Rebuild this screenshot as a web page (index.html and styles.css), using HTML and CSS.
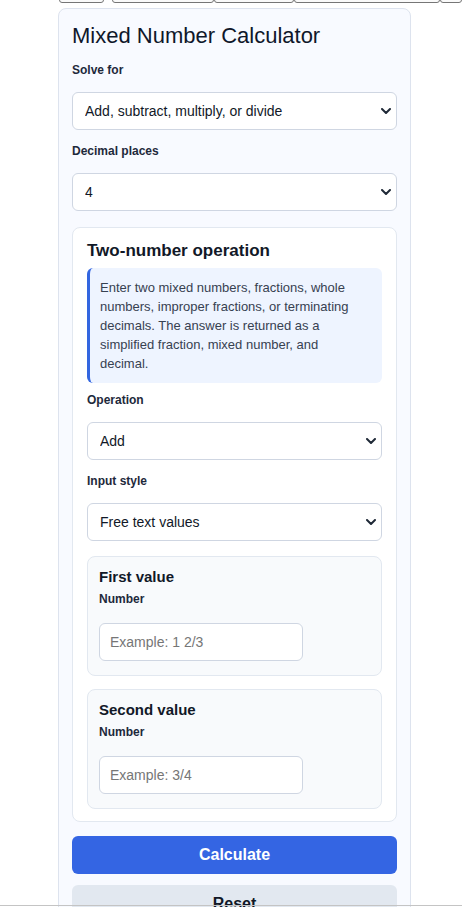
FILE: index.html
```html
<!DOCTYPE html>
<html lang="en">
<head>
<meta charset="utf-8">
<title>Mixed Number Calculator</title>
<link rel="stylesheet" href="styles.css">
</head>
<body>
<nav class="topnav" aria-label="Site">
  <button class="navbtn nb1" type="button" aria-label="Home"></button>
  <button class="navbtn nb2" type="button" aria-label="Calculators"></button>
  <button class="navbtn nb3" type="button" aria-label="Math"></button>
  <button class="navbtn nb4" type="button" aria-label="Fractions"></button>
  <button class="navbtn nb5" type="button" aria-label="More"></button>
</nav>

<main class="card">
  <h1 class="title">Mixed Number Calculator</h1>

  <label class="label" for="solve">Solve for</label>
  <div class="select-wrap">
    <select id="solve" class="select">
      <option>Add, subtract, multiply, or divide</option>
    </select>
    <svg class="chev" width="10" height="6" viewBox="0 0 10 6" aria-hidden="true"><path d="M1 1 L5 5 L9 1" fill="none" stroke="#1f2937" stroke-width="2" stroke-linecap="round" stroke-linejoin="round"/></svg>
  </div>

  <label class="label" for="dec">Decimal places</label>
  <div class="select-wrap">
    <select id="dec" class="select">
      <option>4</option>
    </select>
    <svg class="chev" width="10" height="6" viewBox="0 0 10 6" aria-hidden="true"><path d="M1 1 L5 5 L9 1" fill="none" stroke="#1f2937" stroke-width="2" stroke-linecap="round" stroke-linejoin="round"/></svg>
  </div>

  <section class="panel">
    <h2 class="panel-title">Two-number operation</h2>
    <p class="info">Enter two mixed numbers, fractions, whole numbers, improper fractions, or terminating decimals. The answer is returned as a simplified fraction, mixed number, and decimal.</p>

    <label class="label label-first" for="op">Operation</label>
    <div class="select-wrap">
      <select id="op" class="select">
        <option>Add</option>
      </select>
      <svg class="chev" width="10" height="6" viewBox="0 0 10 6" aria-hidden="true"><path d="M1 1 L5 5 L9 1" fill="none" stroke="#1f2937" stroke-width="2" stroke-linecap="round" stroke-linejoin="round"/></svg>
    </div>

    <label class="label" for="style">Input style</label>
    <div class="select-wrap">
      <select id="style" class="select">
        <option>Free text values</option>
      </select>
      <svg class="chev" width="10" height="6" viewBox="0 0 10 6" aria-hidden="true"><path d="M1 1 L5 5 L9 1" fill="none" stroke="#1f2937" stroke-width="2" stroke-linecap="round" stroke-linejoin="round"/></svg>
    </div>

    <div class="valbox valbox-first">
      <h3 class="val-title">First value</h3>
      <label class="label label-num" for="v1">Number</label>
      <input id="v1" class="input" type="text" placeholder="Example: 1 2/3">
    </div>

    <div class="valbox valbox-second">
      <h3 class="val-title">Second value</h3>
      <label class="label label-num" for="v2">Number</label>
      <input id="v2" class="input" type="text" placeholder="Example: 3/4">
    </div>
  </section>

  <button class="btn btn-primary" type="button">Calculate</button>
  <button class="btn btn-secondary" type="button">Reset</button>
</main>

<div class="bottom-edge"></div>
</body>
</html>
```

FILE: styles.css
```css
html, body {
  margin: 0;
  padding: 0;
  background: #ffffff;
  overflow: hidden;
}

body {
  font-family: "Liberation Sans", Arial, sans-serif;
  color: #1f2937;
}

.topnav {
  display: flex;
  margin: -27px 0 5px 59px;
  height: 30px;
  white-space: nowrap;
}

.navbtn {
  height: 30px;
  border: 1px solid #767676;
  border-radius: 3px;
  background: #fafafa;
  padding: 0;
  flex: none;
}

.nb1 { width: 45px; margin-right: 8px; }
.nb2 { width: 102px; }
.nb3 { width: 80px; }
.nb4 { width: 146px; }
.nb5 { width: 22px; }

.card {
  box-sizing: border-box;
  width: 353px;
  margin-left: 58px;
  padding: 14px 13px 40px;
  background: #f8faff;
  border: 1px solid #dde3ee;
  border-radius: 8px;
}

.title {
  margin: 0;
  font-size: 22px;
  line-height: 26px;
  font-weight: 400;
  color: #0f172a;
}

.label {
  display: block;
  margin: 14px 0 15px;
  font-size: 12px;
  line-height: 14px;
  font-weight: 700;
  color: #1e293b;
}

.label-first {
  margin-top: 10px;
}

.select-wrap {
  position: relative;
}

.select {
  display: block;
  box-sizing: border-box;
  width: 100%;
  height: 38px;
  margin: 0;
  padding: 0 30px 0 12px;
  border: 1px solid #cfd6e2;
  border-radius: 6px;
  background: #ffffff;
  font: 14px "Liberation Sans", Arial, sans-serif;
  color: #111827;
  -webkit-appearance: none;
  appearance: none;
}

.chev {
  position: absolute;
  right: 6px;
  top: 16px;
  pointer-events: none;
}

.panel {
  margin-top: 16px;
  padding: 13px 14px 12px;
  background: #ffffff;
  border: 1px solid #e2e8f0;
  border-radius: 8px;
}

.panel-title {
  margin: 0;
  font-size: 17px;
  line-height: 20px;
  font-weight: 700;
  color: #111827;
}

.info {
  margin: 7px 0 0;
  padding: 10px 12px 10px 10px;
  background: #eef4ff;
  border-left: 3px solid #3366e0;
  border-radius: 6px;
  font-size: 13px;
  line-height: 19px;
  color: #374151;
}

.valbox {
  padding: 11px 11px 14px;
  background: #f8fafc;
  border: 1px solid #e2e8f0;
  border-radius: 8px;
}

.valbox-first {
  margin-top: 15px;
}

.valbox-second {
  margin-top: 13px;
}

.val-title {
  margin: 0;
  font-size: 15px;
  line-height: 18px;
  font-weight: 700;
  color: #111827;
}

.label-num {
  margin: 6px 0 17px;
}

.input {
  display: block;
  box-sizing: border-box;
  width: 204px;
  height: 38px;
  margin: 0;
  padding: 0 10px;
  border: 1px solid #cfd6e2;
  border-radius: 6px;
  background: #ffffff;
  font: 14px "Liberation Sans", Arial, sans-serif;
  color: #111827;
}

.input::placeholder {
  color: #767676;
}

.btn {
  display: block;
  box-sizing: border-box;
  width: 100%;
  height: 38px;
  border: 0;
  border-radius: 6px;
  font: 700 16px "Liberation Sans", Arial, sans-serif;
  padding: 0;
}

.btn-primary {
  margin-top: 14px;
  background: #3465e3;
  color: #ffffff;
}

.btn-secondary {
  margin-top: 11px;
  background: #e2e8f0;
  color: #111827;
}

.bottom-edge {
  position: fixed;
  left: 0;
  right: 0;
  bottom: 1px;
  height: 1px;
  background: #c4c4c4;
}
```
